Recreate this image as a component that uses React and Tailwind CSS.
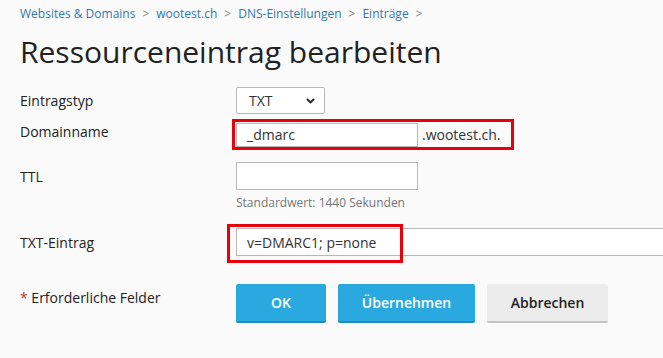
export default function App() {
  const font = { fontFamily: '"Open Sans", "Liberation Sans", sans-serif' };
  return (
    <div style={font} className="w-[663px] h-[358px] overflow-hidden bg-[#fafafa] text-[#222]">
      {/* Breadcrumb */}
      <div className="pl-5 pt-[6px] flex items-center text-[12px] leading-[16px]">
        <span className="text-[#2f78b0]">Websites &amp; Domains</span>
        <span className="text-[#888] mx-[7px]">&gt;</span>
        <span className="text-[#2f78b0]">wootest.ch</span>
        <span className="text-[#888] mx-[7px]">&gt;</span>
        <span className="text-[#2f78b0]">DNS-Einstellungen</span>
        <span className="text-[#888] mx-[7px]">&gt;</span>
        <span className="text-[#2f78b0]">Einträge</span>
        <span className="text-[#888] mx-[7px]">&gt;</span>
      </div>
      {/* Title */}
      <h1 className="pl-5 mt-[10px] text-[30px] leading-[40px] font-normal text-[#222]">
        Ressourceneintrag bearbeiten
      </h1>

      <div className="pl-5 mt-[15px] text-[14px]">
        {/* Eintragstyp */}
        <div className="flex items-center h-[27px]">
          <div className="w-[216px] shrink-0">Eintragstyp</div>
          <div className="relative w-[89px] h-[27px] bg-white border border-[#b8b8b8] rounded-[2px] flex items-center pl-[12px]">
            <span className="text-[#333]">TXT</span>
            <svg className="absolute right-[9px] top-[10px]" width="9" height="6" viewBox="0 0 9 6">
              <path d="M1 1 L4.5 4.5 L8 1" fill="none" stroke="#222" strokeWidth="1.8" />
            </svg>
          </div>
        </div>

        {/* Domainname */}
        <div className="flex items-start h-[31px] mt-[5px]">
          <div className="w-[212px] shrink-0 pt-[3px] leading-[20px]">Domainname</div>
          <div className="w-[282px] h-[31px] border-[3px] border-[#e8000b] flex items-center pl-[1px]">
            <div className="w-[182px] h-[24px] bg-white border border-[#b8b8b8] flex items-center pl-[10px] text-[#333]">
              _dmarc
            </div>
            <span className="ml-[4px] text-[#333]">.wootest.ch.</span>
          </div>
        </div>

        {/* TTL */}
        <div className="flex items-center h-[28px] mt-[12px]">
          <div className="w-[216px] shrink-0 pt-[1px]">TTL</div>
          <div className="w-[182px] h-[28px] bg-white border border-[#b8b8b8]" />
        </div>
        <div className="pl-[216px] mt-[5px] text-[12px] leading-[16px] text-[#777]">
          Standardwert: 1440 Sekunden
        </div>

        {/* TXT-Eintrag */}
        <div className="flex items-center h-[28px] mt-[17px]">
          <div className="w-[216px] shrink-0">TXT-Eintrag</div>
          <div className="relative shrink-0">
            <div className="w-[440px] h-[28px] bg-white border border-[#b8b8b8] flex items-center pl-[10px] text-[#333]">
              v=DMARC1; p=none
            </div>
            <div className="absolute left-[-9px] top-[-4px] w-[176px] h-[39px] border-[3px] border-[#e8000b]" />
          </div>
        </div>

        {/* Buttons */}
        <div className="flex items-start mt-[28px]">
          <div className="w-[216px] shrink-0 pt-[3px]">
            <span className="text-[#c0392b]">*</span> Erforderliche Felder
          </div>
          <div className="flex gap-[12px]">
            <button className="w-[90px] h-[39px] bg-[#29a9df] border-b-2 border-[#1e8cbf] rounded-[2px] text-white font-semibold text-[14px]">
              OK
            </button>
            <button className="w-[137px] h-[39px] bg-[#29a9df] border-b-2 border-[#1e8cbf] rounded-[2px] text-white font-semibold text-[14px]">
              Übernehmen
            </button>
            <button className="w-[121px] h-[39px] bg-[#ececec] border-b-2 border-[#c4c4c4] rounded-[2px] text-[#222] font-semibold text-[14px]">
              Abbrechen
            </button>
          </div>
        </div>
      </div>
    </div>
  );
}
